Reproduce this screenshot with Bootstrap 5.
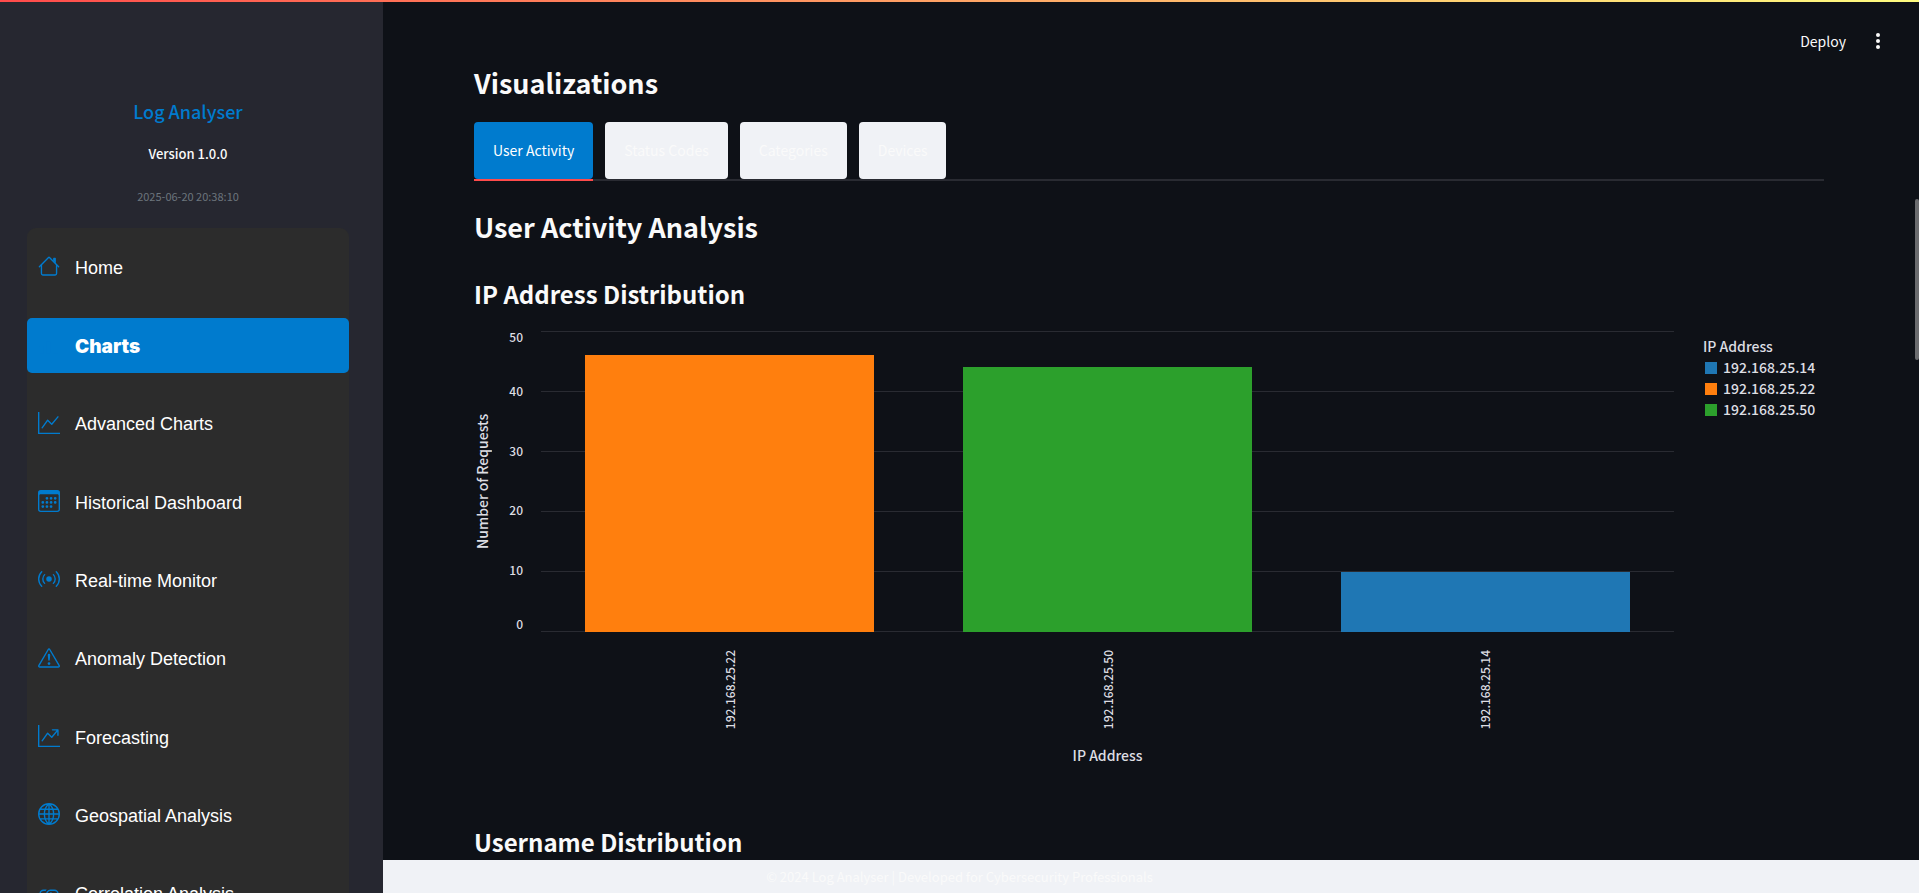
<!DOCTYPE html>
<html lang="en">
<head>
<meta charset="utf-8">
<meta name="viewport" content="width=device-width, initial-scale=1">
<title>Log Analyser</title>
<link href="https://cdn.jsdelivr.net/npm/bootstrap@5.3.0/dist/css/bootstrap.min.css" rel="stylesheet">
<style>
  :root { --accent: #007bce; --ink: #fafafa; --canvas: #0e1117; --pale: #f0f2f6; --rule: #292b32; --soft: #dddee3; }
  body { background: var(--canvas); color: var(--ink); font-family: "Noto Sans CJK SC", "Noto Sans", sans-serif; font-size: 14px; line-height: 20px; }
  .top-strip { height: 2px; background: linear-gradient(90deg, #ff4b4b, #fffd80); z-index: 1040; }
  .side { width: 383px; background: #262730; padding: 98px 34px 0 27px; z-index: 1030; }
  .side-title { color: var(--accent); font-size: 18px; line-height: 26px; font-weight: 500; margin-bottom: 20px; }
  .side-version { font-size: 13px; font-weight: 500; }
  .side-time { color: #6c757d; font-size: 11px; margin-top: 22px; margin-bottom: 22px; }
  .side-menu { background: #2c2c2c; border-radius: 9px; min-height: 705px; grid-auto-rows: 1fr; }
  .side-link { height: 55px; color: #fff; font: 18px/27px "Liberation Sans", sans-serif; padding: 2px 11px 0; gap: 15px; border-radius: 5px; text-decoration: none; }
  .side-link svg { width: 22px; height: 22px; fill: var(--accent); flex: none; margin-bottom: 4px; }
  .side-link.active { background: var(--accent); font-family: Inter, "Liberation Sans", sans-serif; font-weight: 900; font-size: 19px; }
  .page { padding: 63px 95px 0 91px; }
  .page h2 { font-size: 27px; line-height: 40px; font-weight: 600; margin: 0; }
  .page h3 { font-size: 24px; line-height: 34px; font-weight: 600; margin: 0; }
  .view-tabs { margin-top: 19px; gap: 12px; border-bottom: 2px solid var(--rule); }
  .view-tabs .nav-link { background: var(--pale); color: var(--ink); border: 0; border-radius: 4px; padding: 0 19px 2px; height: 57px; font-size: 14px; }
  .view-tabs .nav-link.active { background: var(--accent); color: #fff; }
  .view-tabs li.current { border-bottom: 2px solid #ff4b4b; margin-bottom: -2px; }
  .page .panel-title { margin-top: 26px; }
  .page .first-chart { margin-top: 30px; }
  .page .next-chart { margin-top: 60px; }
  .tools { top: 29px; right: 31px; gap: 22px; }
  .tool-btn { color: var(--ink); border: 0; padding: 0; font-size: 14px; }
  .chart { color: var(--soft); font-size: 14px; font-weight: 500; padding-top: 20px; }
  .turned { writing-mode: vertical-rl; transform: rotate(180deg); }
  .axis-y { height: 301px; line-height: 17px; text-align: center; }
  .ticks { width: 50px; height: 299px; padding-right: 18px; font-size: 12px; line-height: 12px; text-align: right; }
  .ticks span { flex: 2 1 0; display: flex; align-items: center; justify-content: flex-end; }
  .ticks span:first-child { flex-grow: 1; align-items: flex-start; }
  .ticks span:last-child { flex-grow: 1; align-items: flex-end; }
  .plot { height: 301px; background: repeating-linear-gradient(var(--rule) 0 1px, transparent 1px 60px); }
  .band { flex: 1 1 0; display: flex; justify-content: center; align-items: flex-end; }
  .bar { width: 289px; }
  .band .turned { font-size: 12px; line-height: 16px; }
  .x-labels { padding-top: 18px; }
  .c-blue { background: #1f77b4; } .c-orange { background: #ff7f0e; } .c-green { background: #2ca02c; }
  .key { width: 121px; margin: 5px 0 0 29px; line-height: 21px; white-space: nowrap; }
  .swatch { width: 12px; height: 12px; margin: 0 6px 0 2px; }
  .foot { height: 33px; background: var(--pale); color: var(--ink); z-index: 1020; font-size: 13px; }
  .thumb { right: 0; top: 199px; width: 4px; height: 161px; background: #6b6c6f; border-radius: 2px; }
</style>
</head>
<body class="vh-100 overflow-hidden">
<div class="top-strip fixed-top"></div>
<div class="d-flex vh-100">
  <aside class="side flex-shrink-0 position-relative overflow-hidden text-center">
    <div class="side-title">Log Analyser</div>
    <div class="side-version">Version 1.0.0</div>
    <div class="side-time">2025-06-20 20:38:10</div>
    <nav class="side-menu d-grid align-items-center">
      <a class="side-link d-flex align-items-center" href="#"><svg viewBox="0 0 16 16"><path fill-rule="evenodd" d="M2 13.5V7h1v6.500a.5.5 0 0 0 .5.5h9a.5.5 0 0 0 .5-.5V7h1v6.500a1.500 1.500 0 0 1-1.500 1.500h-9A1.500 1.500 0 0 1 2 13.500zm11-11V6l-2-2V2.500a.5.5 0 0 1 .5-.5h1a.5.5 0 0 1 .5.5z"/><path fill-rule="evenodd" d="M7.293 1.500a1 1 0 0 1 1.414 0l6.647 6.646a.5.5 0 0 1-.708.708L8 2.207 1.354 8.854a.5.5 0 1 1-.708-.708L7.293 1.500z"/></svg>Home</a>
      <a class="side-link active d-flex align-items-center" href="#" aria-current="page"><svg viewBox="0 0 16 16"><path d="M1 10h3v5H1zm5-4h3v9H6zm5-4h3v13h-3z"/></svg>Charts</a>
      <a class="side-link d-flex align-items-center" href="#"><svg viewBox="0 0 16 16"><path fill-rule="evenodd" d="M0 0h1v15h15v1H0V0zm14.817 3.113a.5.5 0 0 1 .07.704l-4.500 5.500a.5.5 0 0 1-.74.037L7.060 6.767l-3.656 5.027a.5.5 0 0 1-.808-.588l4-5.500a.5.5 0 0 1 .758-.06l2.609 2.610 4.150-5.073a.5.5 0 0 1 .704-.07z"/></svg>Advanced Charts</a>
      <a class="side-link d-flex align-items-center" href="#"><svg viewBox="0 0 16 16"><path d="M14 0H2a2 2 0 0 0-2 2v12a2 2 0 0 0 2 2h12a2 2 0 0 0 2-2V2a2 2 0 0 0-2-2zM1 3.857C1 3.384 1.448 3 2 3h12c.552 0 1 .384 1 .857v10.286c0 .473-.448.857-1 .857H2c-.552 0-1-.384-1-.857V3.857z"/><path d="M6.500 7a1 1 0 1 0 0-2 1 1 0 0 0 0 2zm3 0a1 1 0 1 0 0-2 1 1 0 0 0 0 2zm3 0a1 1 0 1 0 0-2 1 1 0 0 0 0 2zm-9 3a1 1 0 1 0 0-2 1 1 0 0 0 0 2zm3 0a1 1 0 1 0 0-2 1 1 0 0 0 0 2zm3 0a1 1 0 1 0 0-2 1 1 0 0 0 0 2zm3 0a1 1 0 1 0 0-2 1 1 0 0 0 0 2zm-9 3a1 1 0 1 0 0-2 1 1 0 0 0 0 2zm3 0a1 1 0 1 0 0-2 1 1 0 0 0 0 2zm3 0a1 1 0 1 0 0-2 1 1 0 0 0 0 2z"/></svg>Historical Dashboard</a>
      <a class="side-link d-flex align-items-center" href="#"><svg viewBox="0 0 16 16"><path d="M3.050 3.050a7 7 0 0 0 0 9.900.5.5 0 0 1-.707.707 8 8 0 0 1 0-11.314.5.5 0 0 1 .707.707zm2.122 2.122a4 4 0 0 0 0 5.656.5.5 0 1 1-.708.708 5 5 0 0 1 0-7.072.5.5 0 0 1 .708.708zm5.656-.708a.5.5 0 0 1 .708 0 5 5 0 0 1 0 7.072.5.5 0 1 1-.708-.708 4 4 0 0 0 0-5.656.5.5 0 0 1 0-.708zm2.122-2.120a.5.5 0 0 1 .707 0 8 8 0 0 1 0 11.313.5.5 0 0 1-.707-.707 7 7 0 0 0 0-9.900.5.5 0 0 1 0-.707zM10 8a2 2 0 1 1-4 0 2 2 0 0 1 4 0z"/></svg>Real-time Monitor</a>
      <a class="side-link d-flex align-items-center" href="#"><svg viewBox="0 0 16 16"><path d="M7.938 2.016A.13.13 0 0 1 8.002 2a.13.13 0 0 1 .063.016.146.146 0 0 1 .054.057l6.857 11.667c.036.060.035.124.002.183a.163.163 0 0 1-.054.060.116.116 0 0 1-.066.017H1.146a.115.115 0 0 1-.066-.017.163.163 0 0 1-.054-.060.176.176 0 0 1 .002-.183L7.884 2.073a.147.147 0 0 1 .054-.057zm1.044-.450a1.130 1.130 0 0 0-1.960 0L.165 13.233c-.457.778.091 1.767.98 1.767h13.713c.889 0 1.438-.990.98-1.767L8.982 1.566z"/><path d="M7.002 12a1 1 0 1 1 2 0 1 1 0 0 1-2 0zM7.100 5.995a.905.905 0 1 1 1.800 0l-.35 3.507a.552.552 0 0 1-1.100 0L7.100 5.995z"/></svg>Anomaly Detection</a>
      <a class="side-link d-flex align-items-center" href="#"><svg viewBox="0 0 16 16"><path fill-rule="evenodd" d="M0 0h1v15h15v1H0V0zm10 3.500a.5.5 0 0 1 .5-.5h4a.5.5 0 0 1 .5.5v4a.5.5 0 0 1-1 0V4.900l-3.613 4.417a.5.5 0 0 1-.74.037L7.060 6.767l-3.656 5.027a.5.5 0 0 1-.808-.588l4-5.500a.5.5 0 0 1 .758-.06l2.609 2.610L13.445 4H10.500a.5.5 0 0 1-.5-.5z"/></svg>Forecasting</a>
      <a class="side-link d-flex align-items-center" href="#"><svg viewBox="0 0 16 16"><path fill="none" stroke="#007bce" d="M8 .5a7.500 7.500 0 1 0 0 15a7.500 7.500 0 1 0 0-15zM8 .5v15M.5 8h15M1.700 4.500h12.600M1.700 11.500h12.600M8 .5C3.500 4 3.500 12 8 15.500C12.500 12 12.500 4 8 .5"/></svg>Geospatial Analysis</a>
      <a class="side-link d-flex align-items-center" href="#"><svg viewBox="0 0 16 16"><path d="M6.354 5.500H4a3 3 0 0 0 0 6h3a3 3 0 0 0 2.830-4H9c-.086 0-.170.010-.250.031A2 2 0 0 1 7 10.500H4a2 2 0 1 1 0-4h1.535c.218-.376.495-.714.820-1z"/><path d="M9 5.500a3 3 0 0 0-2.830 4h1.098A2 2 0 0 1 9 6.500h3a2 2 0 1 1 0 4h-1.535a4.020 4.020 0 0 1-.820 1H12a3 3 0 1 0 0-6H9z"/></svg>Correlation Analysis</a>
    </nav>
  </aside>

  <main class="page flex-grow-1 overflow-hidden position-relative">
    <div class="tools position-absolute d-flex align-items-center">
      <button class="btn tool-btn">Deploy</button>
      <button class="btn tool-btn" aria-label="Menu"><svg width="20" height="24" viewBox="0 0 20 24" fill="#fafafa"><circle cx="10" cy="6" r="2"/><circle cx="10" cy="12" r="2"/><circle cx="10" cy="18" r="2"/></svg></button>
    </div>
    <h2>Visualizations</h2>
    <ul class="nav view-tabs">
      <li class="current"><button class="nav-link active">User Activity</button></li>
      <li><button class="nav-link">Status Codes</button></li>
      <li><button class="nav-link">Categories</button></li>
      <li><button class="nav-link">Devices</button></li>
    </ul>
    <h2 class="panel-title">User Activity Analysis</h2>
    <h3 class="first-chart">IP Address Distribution</h3>
    <section class="chart d-flex align-items-start">
      <div class="axis-y turned">Number of Requests</div>
      <div class="ticks d-flex flex-column"><span>50</span><span>40</span><span>30</span><span>20</span><span>10</span><span>0</span></div>
      <div class="flex-grow-1">
        <div class="plot d-flex">
          <div class="band"><div class="bar c-orange" style="height:92%"></div></div>
          <div class="band"><div class="bar c-green" style="height:88%"></div></div>
          <div class="band"><div class="bar c-blue" style="height:20%"></div></div>
        </div>
        <div class="x-labels d-flex">
          <div class="band"><span class="turned">192.168.25.22</span></div>
          <div class="band"><span class="turned">192.168.25.50</span></div>
          <div class="band"><span class="turned">192.168.25.14</span></div>
        </div>
        <div class="text-center pt-3">IP Address</div>
      </div>
      <div class="key">
        <div>IP Address</div>
        <div class="d-flex align-items-center"><span class="swatch c-blue"></span>192.168.25.14</div>
        <div class="d-flex align-items-center"><span class="swatch c-orange"></span>192.168.25.22</div>
        <div class="d-flex align-items-center"><span class="swatch c-green"></span>192.168.25.50</div>
      </div>
    </section>
    <h3 class="next-chart">Username Distribution</h3>
    <div class="thumb position-absolute"></div>
  </main>
</div>
<footer class="foot fixed-bottom d-flex align-items-center justify-content-center">© 2024 Log Analyser | Developed for Cybersecurity Professionals</footer>
<script src="https://cdn.jsdelivr.net/npm/bootstrap@5.3.0/dist/js/bootstrap.bundle.min.js"></script>
</body>
</html>
